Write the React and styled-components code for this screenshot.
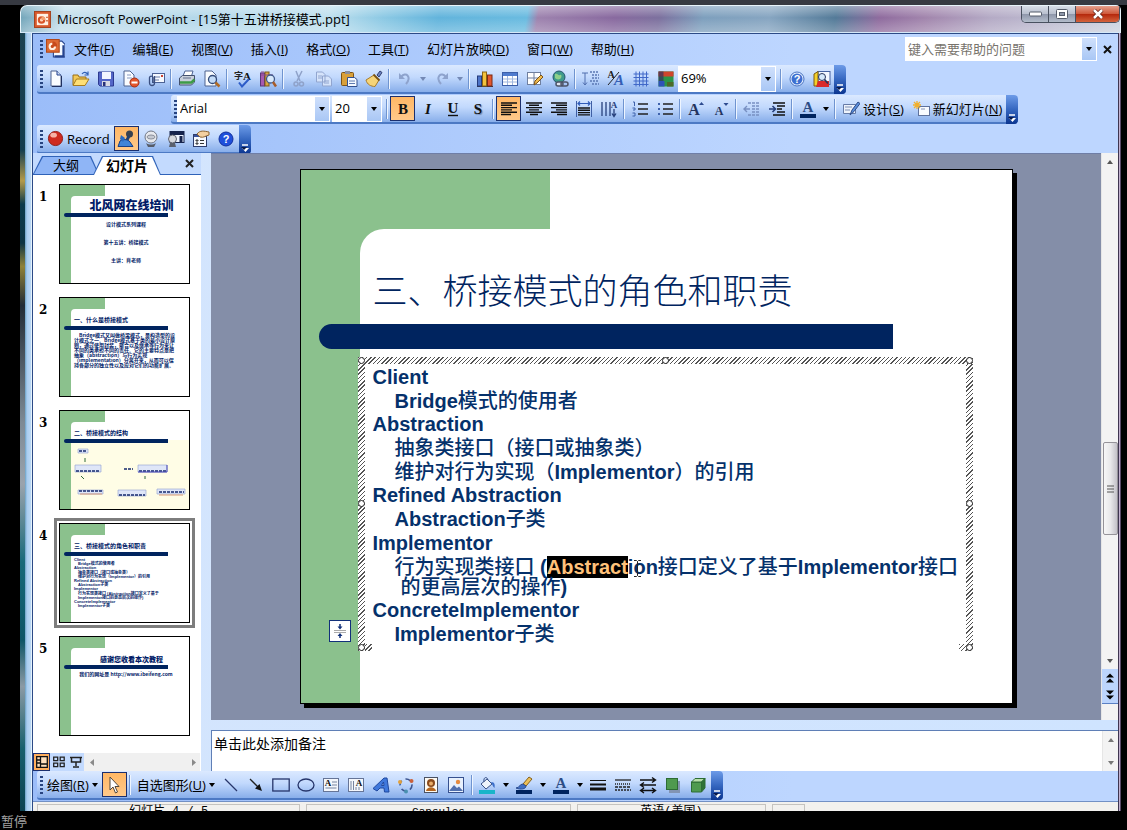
import React from "react";
import styled, { createGlobalStyle, css } from "styled-components";

const ui = `"Open Sans", "Noto Sans CJK SC", sans-serif`;
const cjk = `"Noto Sans CJK SC", sans-serif`;
const navy = "#00245f";
const green = "#8bc18d";

const Global = createGlobalStyle`
  *, *::before, *::after { box-sizing: border-box; }
  body { margin: 0; background: #000; font-family: ${ui}; font-size: 13px; color: #000; }
  button, input, select, textarea { font: inherit; color: inherit; margin: 0; border-radius: 0; }
  button { background: none; border: 0; padding: 0; }
  h1, h2, p, ul, ol { margin: 0; padding: 0; font-weight: inherit; list-style: none; }
`;

/* ---------- window frame ---------- */
const Page = styled.div`
  height: 100vh;
  min-height: 600px;
  display: flex;
  flex-direction: column;
  overflow: hidden;
`;
const DesktopStrip = styled.div`height: 5px; flex: none; background: #373a42;`;
const Window = styled.div`
  flex: 1;
  min-height: 0;
  margin: 0 6px 0 20px;
  display: flex;
  flex-direction: column;
`;
const TitleBar = styled.header`
  height: 28px;
  flex: none;
  display: flex;
  align-items: center;
  gap: 6px;
  padding-left: 13px;
  border: 1px solid #e8f4fa;
  border-bottom-color: #d5e8f8;
  border-radius: 7px 5px 0 0;
  background:
    linear-gradient(180deg, rgba(255,255,255,.35), rgba(255,255,255,0) 45%, rgba(255,255,255,.25)),
    linear-gradient(100deg, #6fa3b8 0, #c5dfec 4%, #b4d8ea 16%, #bfe0ee 28%, #8cc9e4 33%, #62b4dc 38%, #69bbe0 46%, #9d82ae 47%, #88699f 54%, #7c709e 58%, #7d9fbd 62%, #86a5c1 68%, #537a98 74%, #8f6b9e 78%, #a184ac 82%, #b4aac5 88%, #cbd3e0 100%);
`;
const TitleText = styled.h1`font-size: 13px; line-height: 20px; flex: 1; white-space: nowrap;`;
const Caption = styled.div`
  align-self: flex-start;
  display: flex;
  border: 1px solid #48505f;
  border-top: 0;
  border-radius: 0 0 5px 5px;
  overflow: hidden;
`;
const CaptionButton = styled.button`
  width: ${(p) => (p.$close ? 43 : 27)}px;
  height: 16px;
  display: flex;
  align-items: center;
  justify-content: center;
  border-right: ${(p) => (p.$close ? 0 : "1px solid #48505f")};
  background: ${(p) =>
    p.$close
      ? "linear-gradient(#e5a08d, #cf5a3c 48%, #b5280c 52%, #d4633c)"
      : "linear-gradient(#d8dee8, #b9c0cf 48%, #8f97ab 52%, #b3bccb)"};
`;
const Body = styled.div`flex: 1; min-height: 0; display: flex;`;
const GlassEdge = styled.div`
  width: 12px;
  flex: none;
  background:
    linear-gradient(90deg, transparent 5px, #6aa0c4 5px, #a9cdf0 7px, #bcd8f4 11px, #e4f2fc 11px),
    linear-gradient(180deg, #1c4352 0, #123d4d 15%, #b39a4a 19%, #0b3a4b 22%, #0d3444 27%, #8f8238 30%, #222c36 35%, #7d8a95 50%, #9aa3ad 58%, #17697a 68%, #0e5466 78%, #8b9aa5 84%, #16606d 92%, #0c4250 100%);
`;
const RightEdge = styled.div`
  width: 3px;
  flex: none;
  background: linear-gradient(90deg, #3e3550 1px, #c3b3d0 1px, #c3b3d0 2px, #5a4a68 2px);
`;
const Client = styled.main`
  flex: 1;
  min-width: 0;
  display: flex;
  flex-direction: column;
  border-left: 1px solid #2c4a86;
  border-top: 1px solid #2c4a86;
  background: linear-gradient(90deg, #9bbdf9, #bdd6ff 70%);
`;

/* ---------- menus and toolbars ---------- */
const Grip = styled.span`
  width: 3px;
  height: 18px;
  flex: none;
  margin-left: 3px;
  background: repeating-linear-gradient(180deg, #27437f 0 2px, transparent 2px 4px);
`;
const MenuRow = styled.nav`
  height: 30px;
  flex: none;
  display: flex;
  align-items: center;
  padding-left: 4px;
  svg { flex: none; }
  > svg { margin: 0 0 2px 3px; }
`;
const MenuItem = styled.button`padding: 0 9px; line-height: 20px; white-space: nowrap;`;
const MenuSpacer = styled.div`flex: 1;`;
const AskBox = styled.div`
  width: 192px;
  height: 24px;
  display: flex;
  background: #fff;
  padding: 1px;
  input { flex: 1; min-width: 0; border: 0; padding: 0 2px; background: #fff; outline: 0; }
  input::placeholder { color: #77736c; opacity: 1; }
`;
const ArrowBox = styled.button`
  width: 14px;
  align-self: stretch;
  flex: none;
  display: flex;
  align-items: center;
  justify-content: center;
  background: linear-gradient(#cfe0fc, #a9c7f5);
`;
const DocClose = styled.button`width: 21px; height: 24px; display: flex; align-items: center; justify-content: center;`;

const ToolbarRow = styled.div`
  flex: none;
  height: ${(p) => p.$h || 30}px;
  padding: ${(p) => (p.$flush ? 0 : 1)}px 0 0 ${(p) => p.$indent || 4}px;
  display: flex;
`;
const Toolbar = styled.div`
  height: 29px;
  display: flex;
  align-items: center;
  border-radius: 3px 4px 4px 3px;
  border-bottom: 2px solid #4c79c4;
  background: linear-gradient(#dbe9ff, #c2d9fd 45%, #88aeea);
`;
const ToolButton = styled.button`
  width: 25px;
  height: 25px;
  flex: none;
  display: flex;
  align-items: center;
  justify-content: center;
  ${(p) =>
    p.$on &&
    css`
      border: 1px solid #1b2f6e;
      background: linear-gradient(#ffb765, #ffc98a);
    `}
`;
const LabelButton = styled.button`
  height: 25px;
  flex: none;
  display: flex;
  align-items: center;
  gap: 3px;
  padding: 0 4px;
  white-space: nowrap;
`;
const DropButton = styled.button`
  width: 12px;
  height: 25px;
  flex: none;
  display: flex;
  align-items: center;
  justify-content: center;
`;
const Divider = styled.span`
  width: 2px;
  height: 20px;
  flex: none;
  margin: 0 2px;
  background: linear-gradient(90deg, #6f94d0 1px, #eef5ff 1px);
`;
const Cap = styled.button`
  width: 12px;
  height: 29px;
  flex: none;
  align-self: flex-start;
  display: flex;
  align-items: flex-end;
  justify-content: center;
  padding-bottom: 2px;
  border-radius: 0 4px 4px 0;
  background: linear-gradient(#6d9be8, #3567c0 50%, #0b3590);
`;
const Combo = styled.label`
  width: ${(p) => p.$w}px;
  height: 26px;
  margin-right: 2px;
  display: flex;
  padding: 1px;
  background: #fff;
  select { flex: 1; min-width: 0; appearance: none; border: 0; padding: 0 0 1px 2px; background: #fff; outline: 0; }
  span { width: 14px; display: flex; align-items: center; justify-content: center; background: linear-gradient(#cfe0fc, #a9c7f5); }
`;

/* ---------- work area ---------- */
const Work = styled.div`
  flex: 1;
  min-height: 0;
  display: grid;
  grid-template-columns: 168px minmax(0, 1fr);
  column-gap: 10px;
  background: linear-gradient(90deg, #d4e5fd, #cfe4ff);
`;
const Pane = styled.aside`display: flex; flex-direction: column; min-height: 0; background: #fff;`;
const Tabs = styled.div`
  height: 22px;
  flex: none;
  display: flex;
  align-items: flex-end;
  border-bottom: 1px solid #2f62b8;
  background: #c3dafe;
`;
const Tab = styled.button`
  position: relative;
  z-index: 0;
  width: ${(p) => (p.$on ? 68 : 66)}px;
  height: ${(p) => (p.$on ? 19 : 18)}px;
  margin-left: ${(p) => (p.$on ? -6 : 0)}px;
  margin-bottom: ${(p) => (p.$on ? -1 : 0)}px;
  line-height: 18px;
  font-size: ${(p) => (p.$on ? 14 : 13)}px;
  font-weight: ${(p) => (p.$on ? 700 : 400)};
  &::before, &::after {
    content: "";
    position: absolute;
    z-index: -1;
    inset: 0;
    background: #2f62b8;
    clip-path: polygon(9px 0, calc(100% - 8px) 0, 100% 100%, 0 100%);
  }
  &::after { inset: 1px 1px 0; background: ${(p) => (p.$on ? "#fff" : "#8fb5f6")}; }
`;
const PaneClose = styled.button`margin-left: auto; width: 24px; height: 22px; display: flex; align-items: center; justify-content: center;`;
const ThumbList = styled.ol`
  flex: 1;
  min-height: 0;
  overflow: hidden;
  padding-top: 4px;
  display: flex;
  flex-direction: column;
  gap: 3px;
`;
const ThumbItem = styled.li`
  flex: none;
  display: grid;
  grid-template-columns: 21px 141px;
  font: 700 12px/16px "DejaVu Serif", serif;
  > span { padding: 10px 0 0 6px; }
`;
const ThumbFrame = styled.button`
  height: 110px;
  padding: 2px;
  border: 3px solid ${(p) => (p.$on ? "#7d7d7d" : "transparent")};
  text-align: left;
`;
const Thumb = styled.div`
  height: 100px;
  border: 1px solid #000;
  padding: 11px 0 0 11px;
  background:
    linear-gradient(${green}, ${green}) 0 0 / 45px 11px no-repeat,
    linear-gradient(${green}, ${green}) 0 0 / 15px 15px no-repeat,
    linear-gradient(${green}, ${green}) 0 0 / 11px 100% no-repeat,
    #fff;
`;
const ThumbInner = styled.div`
  height: 87px;
  border-top-left-radius: 4px;
  background: ${(p) => (p.$cream ? "linear-gradient(#fff 18px, #fffde6 18px)" : "#fff")};
  color: #001a66;
  font: 700 5px/5px ${cjk};
`;
const ThumbTitle = styled.div`
  height: 17px;
  display: flex;
  align-items: flex-end;
  justify-content: ${(p) => (p.$center ? "center" : "flex-start")};
  padding: 0 0 ${(p) => (p.$center ? 2 : 3)}px 3px;
  font-size: ${(p) => p.$size || 6}px;
  line-height: ${(p) => p.$size || 6}px;
  font-weight: ${(p) => (p.$size ? 900 : 700)};
  white-space: nowrap;
`;
const ThumbBar = styled.div`
  width: 104px;
  height: 4px;
  margin-left: -7px;
  border-radius: 2px 0 0 2px;
  background: ${navy};
`;
const ThumbCenter = styled.div`
  display: flex;
  flex-direction: column;
  align-items: center;
  gap: 13px;
  padding: ${(p) => p.$top}px 8px 0 0;
`;
const ThumbText = styled.div`padding: 2px 12px 0 3px; font-size: 5px; line-height: 5px;`;
const ThumbLine = styled.div`
  padding-left: ${(p) => (p.$in ? 4 : 0)}px;
  font: 700 4px/4px "Liberation Sans", ${cjk};
`;
const ThumbLines = styled.div`display: grid; align-content: space-between; height: 52px; padding: 2px 8px 0 3px;`;
const PaneFoot = styled.div`height: 18px; flex: none; display: flex; background: #c3dafe; margin-right: 1px;`;
const ViewButton = styled.button`
  width: 17px;
  height: 18px;
  display: flex;
  align-items: center;
  justify-content: center;
  ${(p) => p.$on && css`border: 1px solid #1b2f6e; background: #ffae5c;`}
`;
const HScroll = styled.div`
  flex: 1;
  display: flex;
  align-items: center;
  justify-content: space-between;
  padding: 0 4px 0 6px;
  background: #f0f0f0;
`;

const Editor = styled.section`display: flex; flex-direction: column; min-height: 0; min-width: 0;`;
const Stage = styled.div`flex: 1; min-height: 0; display: flex; background: #848ea8; box-shadow: inset 0 1px 0 #6f7ea6;`;
const Canvas = styled.div`
  flex: 1;
  min-width: 0;
  display: flex;
  align-items: center;
  justify-content: center;
`;
const Slide = styled.article`
  width: 100%;
  max-width: 713px;
  height: 535px;
  flex: none;
  border: 1px solid #000;
  box-shadow: 4px 4px 0 #000;
  padding: 59px 0 0 59px;
  background:
    linear-gradient(${green}, ${green}) 0 0 / 249px 59px no-repeat,
    linear-gradient(${green}, ${green}) 0 0 / 85px 85px no-repeat,
    linear-gradient(${green}, ${green}) 0 0 / 59px 100% no-repeat,
    #fff;
`;
const SlidePanel = styled.div`height: 100%; background: #fff; border-top-left-radius: 24px;`;
const SlideTitle = styled.h2`
  height: 95px;
  padding: 38px 0 0 13px;
  font: 300 35px/44px ${cjk};
  color: ${navy};
  white-space: nowrap;
`;
const TitleRule = styled.div`
  height: 25px;
  margin: 0 119px 0 -41px;
  border-radius: 13px 0 0 13px;
  background: ${navy};
`;
const hatch = "repeating-linear-gradient(135deg, #555 0 1px, #fff 1px 3px)";
const TextFrame = styled.div`
  position: relative;
  height: 294px;
  margin: 8px 39px 0 -2px;
  padding: 10px 11px 7px 15px;
  background:
    ${hatch} 0 0 / 100% 7px no-repeat,
    ${hatch} 0 0 / 7px 100% no-repeat,
    ${hatch} 100% 0 / 7px 100% no-repeat,
    ${hatch} 0 100% / 14px 7px no-repeat,
    ${hatch} 100% 100% / 14px 7px no-repeat;
`;
const Bullets = styled.ul`
  height: 100%;
  display: flex;
  flex-direction: column;
  justify-content: space-between;
  font: 700 20px/20px "Liberation Sans", ${cjk};
  color: #05316b;
`;
const Bullet = styled.li`
  padding-left: ${(p) => (p.$in ? 28 : 0)}px;
  text-indent: ${(p) => (p.$in ? -6 : 0)}px;
  i { font-style: normal; font-weight: 500; }
`;
const Marked = styled.mark`background: #000; color: #ffc27a;`;
const Handle = styled.span`
  position: absolute;
  width: 7px;
  height: 7px;
  border: 1px solid #222;
  border-radius: 50%;
  background: #fff;
  left: ${(p) => p.$x};
  top: ${(p) => p.$y};
`;
const FitButton = styled.button`
  position: absolute;
  left: -29px;
  bottom: 9px;
  width: 22px;
  height: 22px;
  display: flex;
  align-items: center;
  justify-content: center;
  border: 1px solid #12307a;
  background: #fff;
`;
const CursorSpot = styled.span`
  position: relative;
  svg { position: absolute; left: 5px; top: 4px; }
`;
const VScroll = styled.div`
  width: ${(p) => p.$w || 17}px;
  flex: none;
  display: flex;
  flex-direction: column;
  background: #f3f3f3;
  border-left: 1px solid #e6e6e6;
`;
const ScrollArrow = styled.button`height: 17px; flex: none; display: flex; align-items: center; justify-content: center;`;
const Track = styled.div`flex: ${(p) => p.$grow};`;
const ScrollThumb = styled.div`
  height: 93px;
  flex: none;
  margin-left: 1px;
  display: flex;
  align-items: center;
  justify-content: center;
  border: 1px solid #959399;
  border-radius: 2px;
  background: linear-gradient(90deg, #f7f7f7, #e8e8ea 50%, #c3c1c8);
`;
const PageButton = styled.button`height: 17px; flex: none; display: flex; align-items: center; justify-content: center; background: #bcd5fd;`;
const ScrollEnd = styled.div`height: 17px; flex: none; border-top: 1px solid #5b81c4;`;
const NotesRow = styled.div`height: 41px; flex: none; margin-top: 10px; display: flex; border-top: 1px solid #5f7fb6; border-left: 1px solid #5f7fb6; background: #fff;`;
const Notes = styled.textarea`
  flex: 1;
  min-width: 0;
  border: 0;
  outline: 0;
  resize: none;
  overflow: hidden;
  padding: 1px 2px;
  font: 14px/22px ${cjk};
  background: #fff;
`;
const StatusBar = styled.footer`
  height: 10px;
  flex: none;
  display: flex;
  gap: 6px;
  padding: 2px 0 0 4px;
  border-top: 1px solid #7290c4;
  background: #f2f1ee;
  overflow: hidden;
`;
const StatusCell = styled.div`
  flex: 0 1 ${(p) => p.$w}px;
  height: 22px;
  border: 1px solid #c5c3bf;
  text-align: center;
  font: ${(p) => p.$size || 12}px/15px "Liberation Mono", ${cjk};
  white-space: nowrap;
`;
const PlayerStatus = styled.div`height: 19px; flex: none; padding-left: 1px; font: 13px/20px ${cjk}; color: #a3a3a3;`;

/* ---------- icons ---------- */
const Svg = ({ s = 18, w, h, vb, children }) => (
  <svg width={w || s} height={h || s} viewBox={vb || "0 0 18 18"} fill="none" aria-hidden="true">{children}</svg>
);
const Tri = ({ up, c = "#000", w = 6 }) => (
  <svg width={w} height="4" viewBox="0 0 6 4" aria-hidden="true"><path d={up ? "M0 4h6L3 0z" : "M0 0h6L3 4z"} fill={c} /></svg>
);
const Cross = ({ s = 9, c = "#111" }) => (
  <svg width={s} height={s} viewBox="0 0 9 9" aria-hidden="true"><path d="M1 1l7 7M8 1L1 8" stroke={c} strokeWidth="2" /></svg>
);
const Sheet = ({ x = 3, y = 1, w = 11, h = 15 }) => (
  <path d={`M${x} ${y}h${w - 4}l4 4v${h - 4}h-${w}z`} fill="#fafcff" stroke="#4e628f" />
);
const Letter = ({ children, x = 9, y = 14, size = 15, fill = "#111", ...rest }) => (
  <text x={x} y={y} fontSize={size} fontFamily="Liberation Serif, serif" fontWeight="700" textAnchor="middle" fill={fill} {...rest}>{children}</text>
);
const Rows = ({ xs, y = 4, c = "#111", sw = 1.4 }) => (
  <path d={xs.map(([a, b], i) => `M${a} ${y + i * 2.3}H${b}`).join("")} stroke={c} strokeWidth={sw} />
);

const icons = {
  ppt: <><rect x=".5" y=".5" width="17" height="17" fill="#d9592c" stroke="#a3401c" /><rect x="3" y="3" width="12" height="12" fill="#fff1e4" /><circle cx="8" cy="9.500" r="4" fill="#d8552a" /><circle cx="8" cy="9.500" r="1.700" fill="#ffd7bd" /><path d="M8 9.500V5.500a4 4 0 0 1 4 4z" fill="#f3a06f" /><path d="M13 6h1.500v1.500H13zM13 9.500h1.500V11H13z" fill="#c24a1e" /></>,
  doc: <><path d="M7 2h8l3 3v12H7z" fill="#f5f9ff" stroke="#24438f" /><path d="M16.500 6v10.500H8" stroke="#24438f" strokeWidth="2" /><rect x=".5" y=".5" width="12" height="12" fill="#dd6a35" stroke="#b34717" /><circle cx="6" cy="7" r="3.500" fill="#fff0e2" /><circle cx="6" cy="7" r="1.500" fill="#c84a1b" /><path d="M6 7V2.500A4 4 0 0 1 10.500 7z" fill="#c84a1b" /></>,
  fresh: <><Sheet x={4} w={10} /><path d="M10 1v4h4" stroke="#24438f" fill="#c8d8f4" /><path d="M14.500 6v10.500H5" stroke="#1f2f5e" /></>,
  open: <><path d="M1 15V5h5l1 2h7v3" fill="#f2c958" stroke="#9a6f16" /><path d="M1 15.500L4.500 9H17l-4 6.500z" fill="#ffdf75" stroke="#a87c1d" /><path d="M10 4c2-2.500 4-2 5.500 0M16 1.500V5h-3.500" stroke="#2e5fb5" strokeWidth="1.200" /></>,
  save: <><path d="M1.500 2h15v14H3l-1.500-1.500z" fill="#5466c8" stroke="#2c3a91" /><rect x="5" y="2" width="9" height="7" fill="#f3f6ff" /><rect x="5" y="11" width="8" height="5" fill="#d7d9e4" /><rect x="6" y="12" width="2.500" height="4" fill="#27307a" /></>,
  perm: <><Sheet x={2} w={10} /><path d="M5 5h4M5 8h5" stroke="#8a9bc0" /><circle cx="12.500" cy="12.500" r="4.500" fill="#e4562c" stroke="#a72d12" /><path d="M9.500 12.500h6" stroke="#fff" strokeWidth="2" /></>,
  mail: <><rect x="5.500" y="3.500" width="12" height="9" fill="#f5f9ff" stroke="#4c6294" /><path d="M8 7h5M8 10h4" stroke="#6d7fa8" /><rect x="14" y="5" width="2" height="2" fill="#c43" /><path d="M7.500 6v7a2.500 2.500 0 0 1-5 0V7.500a1.800 1.800 0 0 1 3.500 0V13" stroke="#3a4f80" strokeWidth="1.300" /></>,
  print: <><path d="M5 6l2-5h8l-1.500 5" fill="#fff" stroke="#4c6294" /><path d="M1.500 8l3-2.500h12V12l-3 3h-12z" fill="#c8cfdb" stroke="#44516e" /><path d="M2 12.500h11.500l3-3" stroke="#3d9b47" strokeWidth="2.500" /><path d="M5 8h8" stroke="#65718c" /></>,
  preview: <><Sheet x={2} w={11} /><circle cx="9.500" cy="9.500" r="4" fill="#c4dcf8" stroke="#334a78" strokeWidth="1.300" /><path d="M12.500 12.500l4 4" stroke="#b26b23" strokeWidth="2.500" /></>,
  spell: <><text x="0" y="9" fontSize="9" fontWeight="700" fontFamily="Noto Sans CJK SC" fill="#222">字</text><Letter x={13} y={10} size={11}>A</Letter><path d="M5 12.500l3 4L15 9" stroke="#2d5cc8" strokeWidth="2" /></>,
  research: <><rect x="1.500" y="3" width="4" height="13" fill="#a65ab0" stroke="#5a347a" /><rect x="6" y="2" width="4" height="14" fill="#d6a640" stroke="#7c5a1e" /><path d="M2 5h12M2 2h3" stroke="#8a4a90" /><circle cx="11.500" cy="9" r="4" fill="#d8e9fb" stroke="#405a8b" strokeWidth="1.300" /><path d="M14 12l3 4.500" stroke="#a75c28" strokeWidth="2.500" /></>,
  cut: <><path d="M6 1l4 10M12 1L7 11" stroke="#8fa2c9" strokeWidth="1.500" /><circle cx="6" cy="14" r="2" stroke="#8fa2c9" strokeWidth="1.500" /><circle cx="11.500" cy="14" r="2" stroke="#8fa2c9" strokeWidth="1.500" /></>,
  copy: <><path d="M1.500 2h6l2.500 2.500V12H1.500zM7.500 6h6l3 3v7h-9z" fill="#d5e3fa" stroke="#91a5cf" /><path d="M3 6h4M3 8h4M9 11h5M9 13h5" stroke="#91a5cf" /></>,
  paste: <><rect x="1.500" y="2.500" width="12" height="13" rx="1" fill="#d9a03a" stroke="#7e5415" /><rect x="5" y="1" width="5" height="3" fill="#8a8f9e" /><path d="M7.500 7.500h7l2.500 2v7H7.500z" fill="#f5f9ff" stroke="#33508f" /><path d="M9 11h6M9 13.500h6" stroke="#5f7ab0" /></>,
  brush: <><path d="M12 5l3-4 2 1.500-3 4.500z" fill="#6b83c4" stroke="#33406e" /><path d="M1 10l8-5 5 5-4 6.500c-4 0-8-2-9-6.500z" fill="#f6d477" stroke="#a87c2a" /><path d="M8.500 4.500l6 6" stroke="#7a5210" strokeWidth="1.800" /></>,
  undo: <><path d="M5 7c5-6 11 0 5 7" stroke="#8ea3cd" strokeWidth="2" /><path d="M3 3v6h6z" fill="#8ea3cd" /></>,
  redo: <><path d="M13 7c-5-6-11 0-5 7" stroke="#8ea3cd" strokeWidth="2" /><path d="M15 3v6H9z" fill="#8ea3cd" /></>,
  chart: <><path d="M1 16.500h16" stroke="#334" /><rect x="1.500" y="6" width="4" height="10" fill="#4d74c8" stroke="#243b7d" /><rect x="6.500" y="2" width="4" height="14" fill="#f3c33e" stroke="#8b6414" /><rect x="11.500" y="5" width="4.500" height="11" fill="#e2582e" stroke="#7d2812" /></>,
  table: <><rect x="1.500" y="2.500" width="15" height="13" fill="#fff" stroke="#3c5fa8" /><path d="M2 3h14v3H2z" fill="#4f7bce" /><path d="M2 9h14M2 12h14M6.500 6v9M11.500 6v9" stroke="#9fb6de" /></>,
  drawTable: <><rect x="1.500" y="2.500" width="13" height="12" fill="#fff" stroke="#6f7f9f" /><path d="M2 8h12M8 3v11" stroke="#6f7f9f" /><path d="M8 15l1-4 6-6 2 2-6 6z" fill="#f0bb4f" stroke="#7c5317" /></>,
  link: <><circle cx="8" cy="7" r="6" fill="#3f9a8c" stroke="#27556f" /><path d="M4 4c3-1 3 2 5 1s2 3 0 4-4 0-5-1z" fill="#8fd08a" /><rect x="5" y="12" width="7" height="4" rx="2" stroke="#4c5468" strokeWidth="1.500" fill="#dde3ee" /><rect x="10" y="12" width="7" height="4" rx="2" stroke="#4c5468" strokeWidth="1.500" /></>,
  expand: <><path d="M3 3v12M1 12.500L3 15l2-2.500M0 3h6" stroke="#516fae" /><path d="M8 2h9M10 5h7M10 8h7M8 11h9M10 14h7" stroke="#5b78b4" strokeDasharray="2 1" strokeWidth="1.300" /></>,
  fontAA: <><Letter x={4} y={8} size={10} fill="#222">A</Letter><path d="M1 15L12 2" stroke="#222" /><Letter x={12} y={15} size={15} fill="#355eb5" fontStyle="italic">A</Letter></>,
  grid: <path d="M4 1.500v15M7.500 1.500v15M11 1.500v15M14.500 1.500v15M1.500 4h15M1.500 7.500h15M1.500 11h15M1.500 14.500h15" stroke="#4068c8" />,
  colour: <><rect x="1.500" y="1.500" width="15" height="15" fill="#2c9448" /><path d="M1.500 1.500h15v5h-15z" fill="#d0452c" /><path d="M1.500 11h6v5.500h-6z" fill="#2f52b8" /><path d="M10 12h6.500v4.500H10z" fill="#4d6a28" /><path d="M1.500 1.500h5v9.500h-5z" fill="#33305f" opacity=".7" /></>,
  help: <><circle cx="9" cy="9" r="7" fill="#e8f1fe" stroke="#4a74c2" /><circle cx="9" cy="9" r="5.500" fill="#3d6fd0" /><text x="9" y="13" fontSize="11" fontWeight="700" textAnchor="middle" fontFamily="Liberation Sans" fill="#fff">?</text></>,
  helpSolid: <><circle cx="9" cy="9" r="7" fill="#1f4fdb" stroke="#12309c" /><text x="9" y="13" fontSize="11" fontWeight="700" textAnchor="middle" fontFamily="Liberation Sans" fill="#fff">?</text></>,
  dict: <><rect x="5" y="1.500" width="12" height="13" fill="#f4f8ff" stroke="#4561a0" /><path d="M1 4l4-2.500V16H1z" fill="#f4d02a" stroke="#7a5b10" /><path d="M5 11h11v6H3z" fill="#d9292b" /><circle cx="9" cy="7" r="3.500" fill="#d6e9fb" stroke="#27355c" /><path d="M11.500 9.500l3.500 4" stroke="#27355c" strokeWidth="1.800" /></>,
  bold: <Letter>B</Letter>,
  italic: <Letter fontStyle="italic">I</Letter>,
  under: <><Letter y={13}>U</Letter><path d="M4 15.500h10" stroke="#111" strokeWidth="1.400" /></>,
  shadow: <Letter style={{ textShadow: "1px 1px 1px #7188b0" }}>S</Letter>,
  left: <Rows xs={[[1, 17], [1, 12], [1, 17], [1, 12], [1, 17], [1, 11]]} y={3} />,
  center: <Rows xs={[[1, 17], [4, 14], [1, 17], [4, 14], [1, 17], [5, 13]]} y={3} />,
  right: <Rows xs={[[1, 17], [6, 17], [1, 17], [6, 17], [1, 17], [7, 17]]} y={3} />,
  dist: <><path d="M1.500 1v16M16.500 1v16" stroke="#3f5fa5" /><path d="M3 3.500h12M5 1.500l-2 2 2 2M13 1.500l2 2-2 2" stroke="#2f5bb8" strokeWidth="1.200" /><Rows xs={[[3, 15], [3, 15], [3, 15], [3, 15]]} y={8} /></>,
  vert: <><path d="M2 2v14M6 2v14M10 2v14M14 9v7M12 13.500l2 3 2-3" stroke="#27407c" strokeWidth="1.300" /><Letter x={14} y={8} size={9} fill="#27407c">A</Letter></>,
  nums: <><path d="M7 4h10M7 9h10M7 14h10" stroke="#222" strokeWidth="1.500" /><path d="M2 2h1.500v4M1.500 8H4v2H2M1.500 13H4v3H1.500" stroke="#3f62ac" /></>,
  dots: <><path d="M7 4h10M7 9h10M7 14h10" stroke="#222" strokeWidth="1.500" /><path d="M2 3h2v2H2zM2 8h2v2H2zM2 13h2v2H2z" fill="#3f62ac" /></>,
  bigger: <><Letter x={7} y={15} size={16} fill="#24345f">A</Letter><path d="M12 5l2.500-3L17 5z" fill="#2d4b8f" /></>,
  smaller: <><Letter x={7} y={15} size={12} fill="#24345f">A</Letter><path d="M11.500 3l2.500 3 2.500-3z" fill="#2d4b8f" /></>,
  outdent: <><path d="M5 3h12M9 6h8M9 9h8M9 12h8M5 15h12" stroke="#7890c2" strokeWidth="1.400" strokeDasharray="3 1" /><path d="M7 9H1M4 6L1 9l3 3" stroke="#7890c2" strokeWidth="1.400" /></>,
  indent: <><path d="M5 3h12M9 6h8M9 9h5M9 12h8M5 15h12" stroke="#111" strokeWidth="1.700" /><path d="M1 9h6M4.500 6l3 3-3 3" stroke="#27407c" strokeWidth="1.600" /></>,
  fontColour: <><Letter y={12} size={15} fill="#2d4d86">A</Letter><rect x="1" y="14" width="16" height="4" fill={navy} /></>,
  design: <><path d="M1.500 4.500h12v9h-12z" fill="#eef3fb" stroke="#667ba6" /><path d="M3 7h7M3 10h5" stroke="#7d8fb5" /><path d="M8 15l2-5 6-8 2 1.500-6 8z" fill="#5a8fdc" stroke="#314c87" /></>,
  newSlide: <><rect x="6.500" y="6.500" width="11" height="9" fill="#f8fbff" stroke="#5f729c" /><path d="M9 9h4" stroke="#8493b4" /><path d="M5 1v8M1 5h8M2 2l6 6M8 2L2 8" stroke="#f2b02c" strokeWidth="1.300" /></>,
  record: <><circle cx="9" cy="9" r="7.500" fill="#cf2a20" stroke="#8e1a12" /><ellipse cx="7" cy="5.500" rx="3.500" ry="2.500" fill="#f7b1a6" /></>,
  mic: <><circle cx="12.500" cy="4" r="3.500" fill="#39414f" /><path d="M12 6l-4 8" stroke="#24406e" strokeWidth="3" /><path d="M3 11c2-2 8-2 10 1l3 4.500H1z" fill="#3f84d8" stroke="#173f86" /><path d="M4 5l4 3-2 4-3-3z" fill="#2a6ac0" /></>,
  webcam: <><circle cx="9" cy="7" r="6" fill="#e8eaee" stroke="#707684" /><ellipse cx="9" cy="7" rx="4" ry="2" fill="#c6cad2" stroke="#8b909c" /><path d="M4 13c3 2 7 2 10 0l-2 4H6z" fill="#565c68" /></>,
  camWin: <><rect x="3" y="1.500" width="14" height="11" fill="#eef4ff" stroke="#15234c" /><path d="M3 2h14v3H3z" fill="#15234c" /><path d="M14 6v6" stroke="#15234c" strokeWidth="3" /><circle cx="5.500" cy="9" r="4" fill="#d6d9df" stroke="#5e6370" /><path d="M3 13h5l1 4H2z" fill="#5b616e" /></>,
  props: <><rect x="1.500" y="4.500" width="13" height="12" fill="#f6f9ff" stroke="#2d3d6d" /><path d="M2 5h12v2H2z" fill="#39519a" /><path d="M4 10h2v1H4zM4 13h2v1H4zM8 10.500h4M8 13.500h4" stroke="#333" /><path d="M5 4c3-4 7-3 12-2v3c-4 1-5 3-9 2z" fill="#f3cfa0" stroke="#8d6533" /></>,
  pointer: <path d="M5 1v13l3-3 2.500 6 2-1-2.500-5.500h4z" fill="#fff" stroke="#51473c" />,
  line: <path d="M3 3l12 12" stroke="#27366a" strokeWidth="1.300" />,
  arrow: <><path d="M3 3l9 9" stroke="#222" strokeWidth="1.300" /><path d="M15 15l-7-2.500L12.500 8z" fill="#111" /></>,
  rect: <rect x=".8" y="3" width="16.400" height="12" stroke="#26356a" strokeWidth="1.300" />,
  oval: <ellipse cx="9" cy="9" rx="8" ry="6" stroke="#26356a" strokeWidth="1.300" />,
  textBox: <><rect x="1.500" y="2.500" width="15" height="13" fill="#f4f7fc" stroke="#667597" /><Letter x={6} y={10} size={9}>A</Letter><path d="M10 6h5M10 9h5M3.500 12h11" stroke="#77849f" /></>,
  vText: <><rect x="1.500" y="2.500" width="15" height="13" fill="#f4f7fc" stroke="#667597" /><Letter x={12} y={10} size={9}>A</Letter><path d="M4 5v9M6.500 5v9M9 11v3M12 11v3" stroke="#77849f" /></>,
  wordArt: <path d="M1 12.500L12 2h3l2 14h-4.500l-.5-4H8l-3 3zM9.500 9.500h2.500l-.5-3.500z" fill="#3f78dc" fillRule="evenodd" stroke="#1f489f" />,
  diagram: <><circle cx="9" cy="9" r="6" stroke="#3c5590" strokeWidth="1.600" strokeDasharray="5 4" /><circle cx="3" cy="6" r="2" fill="#e2a13c" /><circle cx="14.500" cy="5" r="2" fill="#c9603a" /><circle cx="9" cy="15.500" r="2" fill="#4a90b0" /></>,
  clip: <><rect x="2.500" y="1.500" width="13" height="15" fill="#fdfaf3" stroke="#4b5263" /><circle cx="9" cy="7" r="4" fill="#8a4a1c" /><circle cx="9" cy="7.500" r="2" fill="#e9ae6a" /><path d="M4 15c1-5 9-5 10 0z" fill="#b3651f" /></>,
  picture: <><rect x="1.500" y="1.500" width="15" height="15" fill="#e8f1fd" stroke="#37518f" /><circle cx="11" cy="6" r="2.200" fill="#e58a3f" /><path d="M2 15l5-6 3 3 2-1.500 4 4.500z" fill="#506fae" /></>,
  fill: <><path d="M3 8l6-5 5 5-6 5z" fill="#eef3fb" stroke="#3a5288" /><path d="M6 6c-1-5 3-6 4-2" stroke="#3a5288" /><path d="M13 6c4 0 4 3 3.500 6-1.500-1-2-3-3.500-6z" fill="#3d6fca" /><rect x="1" y="14" width="16" height="4" fill="#19b5c9" /></>,
  lineColour: <><path d="M8 8l6-7 3 2-6 7z" fill="#edc158" stroke="#856019" /><path d="M1 12c4 0 3-4 7-4l3 2c0 3-5 4-10 2z" fill="#3f6fc4" stroke="#2b4c90" /><rect x="1" y="14" width="16" height="4" fill={navy} /></>,
  weights: <><path d="M1 4.500h16" stroke="#111" /><path d="M1 8.500h16" stroke="#111" strokeWidth="2" /><path d="M1 13h16" stroke="#111" strokeWidth="3" /></>,
  dashes: <><path d="M1 4h16" stroke="#222" strokeWidth="1.300" /><path d="M1 8h16" stroke="#222" strokeDasharray="1 1" strokeWidth="1.300" /><path d="M1 11h16" stroke="#222" strokeDasharray="3 1" strokeWidth="1.300" /><path d="M1 14h16" stroke="#222" strokeDasharray="2 1" strokeWidth="1.300" /></>,
  arrows: <path d="M1 4h15M13 1.500L16.500 4 13 6.500M17 9H2M5 6.500L1.500 9 5 11.500M2 14.500h14M5 12l-3.500 2.500L5 17M13 12l3.500 2.500L13 17" stroke="#111" strokeWidth="1.400" />,
  shade: <><rect x="5" y="5" width="11" height="12" fill="#8294b3" /><rect x="2.500" y="2.500" width="11" height="11" fill="#4f9a4f" stroke="#2d6c34" /></>,
  cube: <><path d="M2.500 6h10v10h-10z" fill="#4f9a4f" stroke="#2d6c34" /><path d="M2.500 6L6 2.500h10L12.500 6z" fill="#b9dfa9" stroke="#2d6c34" /><path d="M16 2.500V12l-3.500 4V6z" fill="#2f7336" stroke="#2d6c34" /></>,
};

const Tool = ({ icon, label, on }) => (
  <ToolButton $on={on} aria-label={label} aria-pressed={on ? true : undefined}><Svg>{icons[icon]}</Svg></ToolButton>
);
const Tools = ({ list }) =>
  list.map(([icon, label, on], i) => {
    if (icon === "|") return <Divider key={i} />;
    if (icon === "v") return <DropButton key={i} aria-label={label}><Tri c={on || "#000"} /></DropButton>;
    return <Tool key={i} icon={icon} label={label} on={on} />;
  });
const EndCap = () => (
  <Cap aria-label="工具栏选项">
    <svg width="8" height="8" viewBox="0 0 8 8" aria-hidden="true"><path d="M1 1h6" stroke="#fff" strokeWidth="1.500" /><path d="M1 4h7L4.500 8z" fill="#fff" /><path d="M0 3h6L3 6z" fill="#06184a" /></svg>
  </Cap>
);
const Key = ({ text, k }) => <span>{text}(<u>{k}</u>)</span>;
const ComboBox = ({ w, label, value }) => (
  <Combo $w={w}>
    <select aria-label={label} defaultValue={value}><option>{value}</option></select>
    <span><Tri w={8} /></span>
  </Combo>
);

const menus = [["文件", "F"], ["编辑", "E"], ["视图", "V"], ["插入", "I"], ["格式", "O"], ["工具", "T"], ["幻灯片放映", "D"], ["窗口", "W"], ["帮助", "H"]];

const standardTools = [
  ["fresh", "新建"], ["open", "打开"], ["save", "保存"], ["perm", "权限"], ["mail", "电子邮件"], ["|"],
  ["print", "打印"], ["preview", "打印预览"], ["|"], ["spell", "拼写检查"], ["research", "信息检索"], ["|"],
  ["cut", "剪切"], ["copy", "复制"], ["paste", "粘贴"], ["brush", "格式刷"], ["|"],
  ["undo", "撤消"], ["v", "撤消列表", "#7489b5"], ["redo", "恢复"], ["v", "恢复列表", "#7489b5"], ["|"],
  ["chart", "插入图表"], ["table", "插入表格"], ["drawTable", "表格和边框"], ["link", "插入超链接"], ["|"],
  ["expand", "全部展开"], ["fontAA", "显示格式"], ["grid", "显示网格"], ["colour", "颜色/灰度"],
];
const formatTools = [
  ["|"], ["bold", "加粗", true], ["italic", "倾斜"], ["under", "下划线"], ["shadow", "阴影"], ["|"],
  ["left", "左对齐", true], ["center", "居中"], ["right", "右对齐"], ["dist", "分散对齐"], ["vert", "更改文字方向"], ["|"],
  ["nums", "编号"], ["dots", "项目符号"], ["|"], ["bigger", "增大字号"], ["smaller", "减小字号"], ["|"],
  ["outdent", "减少缩进量"], ["indent", "增加缩进量"], ["|"], ["fontColour", "字体颜色"], ["v", "字体颜色列表"], ["|"],
];
const drawTools = [
  ["line", "直线"], ["arrow", "箭头"], ["rect", "矩形"], ["oval", "椭圆"], ["textBox", "文本框"], ["vText", "竖排文本框"],
  ["wordArt", "艺术字"], ["diagram", "组织结构图"], ["clip", "剪贴画"], ["picture", "图片"], ["|"],
  ["fill", "填充颜色"], ["v", "填充颜色列表"], ["lineColour", "线条颜色"], ["v", "线条颜色列表"], ["fontColour", "字体颜色"], ["v", "字体颜色列表"],
  ["weights", "线型"], ["dashes", "虚线线型"], ["arrows", "箭头样式"], ["shade", "阴影样式"], ["cube", "三维效果样式"],
];

const bullets = [
  [0, "Client"],
  [1, "Bridge模式的使用者"],
  [0, "Abstraction"],
  [1, "抽象类接口（接口或抽象类）"],
  [1, "维护对行为实现（Implementor）的引用"],
  [0, "Refined Abstraction"],
  [1, "Abstraction子类"],
  [0, "Implementor"],
  [1, "行为实现类接口 (", "Abstract", "ion接口定义了基于Implementor接口的更高层次的操作)"],
  [0, "ConcreteImplementor"],
  [1, "Implementor子类"],
];
const Mixed = ({ text }) =>
  text.split(/([\u3000-\uffef]+)/).map((t, i) => (i % 2 ? <i key={i}>{t}</i> : t));

const ThumbDiagram = () => (
  <svg width="118" height="60" viewBox="0 0 118 60" fill="none" aria-hidden="true">
    <g fill="#dfe6f8" stroke="#8f9fd0" strokeWidth=".6">
      <path d="M7 6h10v4H7zM4 22h26v7H4zM67 22h29v7H67z" />
      <path d="M7 47h25v4H7zM47 47h28v6H47zM86 46h28v5H86z" />
    </g>
    <g stroke="#162a6e" strokeWidth="1.400" strokeDasharray="3 1">
      <path d="M8 8h8M5 28h24M53 26h9M68 28h27M8 48h24M48 52h26M88 49h25" />
    </g>
    <path d="M14 15v4M10 33l3 3M74 33v3" stroke="#306a3a" />
    <path d="M9 51h22M88 52h24" stroke="#d79a7a" />
    <path d="M96 22v7H67" stroke="#4b48b8" />
  </svg>
);

const thumbs = [
  <ThumbInner>
    <ThumbTitle $center $size={12}>北风网在线培训</ThumbTitle>
    <ThumbBar />
    <ThumbCenter $top={4}><span>设计模式系列课程</span><span>第十五讲：桥接模式</span><span>主讲：肖老师</span></ThumbCenter>
  </ThumbInner>,
  <ThumbInner>
    <ThumbTitle>一、什么是桥接模式</ThumbTitle>
    <ThumbBar />
    <ThumbText>　Bridge模式又叫做桥梁模式，是构造型的设计模式之一。Bridge模式基于类的最小设计原则，通过使用封装，聚合以及继承等行为来让不同的类承担不同的责任。它的主要特点是把抽象（abstraction）与行为实现（implementation）分离开来，从而可以保持各部分的独立性以及应对它们的功能扩展。</ThumbText>
  </ThumbInner>,
  <ThumbInner $cream>
    <ThumbTitle>二、桥接模式的结构</ThumbTitle>
    <ThumbBar />
    <ThumbDiagram />
  </ThumbInner>,
  <ThumbInner>
    <ThumbTitle>三、桥接模式的角色和职责</ThumbTitle>
    <ThumbBar />
    <ThumbLines>{bullets.map(([lv, ...t], i) => <ThumbLine key={i} $in={lv}>{t.join("")}</ThumbLine>)}</ThumbLines>
  </ThumbInner>,
  <ThumbInner>
    <ThumbTitle $center $size={7}>感谢您收看本次教程</ThumbTitle>
    <ThumbBar />
    <ThumbCenter $top={2}><span>我们的网址是 http://www.ibeifeng.com</span></ThumbCenter>
  </ThumbInner>,
];

const handles = [["0px", "0px"], ["calc(50% - 3px)", "0px"], ["calc(100% - 7px)", "0px"], ["0px", "calc(50% - 4px)"], ["calc(100% - 7px)", "calc(50% - 4px)"], ["0px", "calc(100% - 7px)"], ["calc(100% - 7px)", "calc(100% - 7px)"]];

export default function App() {
  return (
    <>
      <Global />
      <Page>
        <DesktopStrip />
        <Window>
          <TitleBar>
            <Svg s={17}>{icons.ppt}</Svg>
            <TitleText>Microsoft PowerPoint - [15第十五讲桥接模式.ppt]</TitleText>
            <Caption>
              <CaptionButton aria-label="最小化"><Svg w={13} h={6} vb="0 0 13 6"><rect x=".5" y="1" width="12" height="4" rx="1" fill="#fff" stroke="#555c6b" /></Svg></CaptionButton>
              <CaptionButton aria-label="最大化"><Svg w={12} h={10} vb="0 0 12 10"><rect x=".5" y=".5" width="11" height="9" rx="1" fill="#fff" stroke="#555c6b" /><rect x="3.500" y="3.500" width="5" height="3" fill="#8e97a9" stroke="#555c6b" /></Svg></CaptionButton>
              <CaptionButton $close aria-label="关闭"><Svg w={12} h={10} vb="0 0 12 10"><path d="M2 1l8 8M10 1L2 9" stroke="#5e2015" strokeWidth="4" /><path d="M2 1l8 8M10 1L2 9" stroke="#fff" strokeWidth="2.500" /></Svg></CaptionButton>
            </Caption>
          </TitleBar>
          <Body>
            <GlassEdge />
            <Client>
              <MenuRow>
                <Grip />
                <Svg s={19}>{icons.doc}</Svg>
                {menus.map(([t, k]) => <MenuItem key={k}><Key text={t} k={k} /></MenuItem>)}
                <MenuSpacer />
                <AskBox>
                  <input aria-label="键入需要帮助的问题" placeholder="键入需要帮助的问题" />
                  <ArrowBox aria-label="最近的问题"><Tri w={8} /></ArrowBox>
                </AskBox>
                <DocClose aria-label="关闭文档"><Cross /></DocClose>
              </MenuRow>

              <ToolbarRow>
                <Toolbar role="toolbar" aria-label="常用">
                  <Grip />
                  <Tools list={standardTools} />
                  <ComboBox w={98} label="显示比例" value="69%" />
                  <Divider />
                  <Tools list={[["help", "帮助"], ["dict", "词典"]]} />
                  <EndCap />
                </Toolbar>
              </ToolbarRow>

              <ToolbarRow $indent={138}>
                <Toolbar role="toolbar" aria-label="格式">
                  <Grip />
                  <ComboBox w={153} label="字体" value="Arial" />
                  <ComboBox w={50} label="字号" value="20" />
                  <Tools list={formatTools} />
                  <LabelButton><Svg>{icons.design}</Svg><Key text="设计" k="S" /></LabelButton>
                  <LabelButton><Svg>{icons.newSlide}</Svg><Key text="新幻灯片" k="N" /></LabelButton>
                  <EndCap />
                </Toolbar>
              </ToolbarRow>

              <ToolbarRow $h={29}>
                <Toolbar role="toolbar" aria-label="录制">
                  <Grip />
                  <LabelButton><Svg s={17}>{icons.record}</Svg>Record</LabelButton>
                  <Tools list={[["mic", "麦克风", true], ["webcam", "摄像头"], ["camWin", "画中画"], ["props", "选项"], ["helpSolid", "帮助"]]} />
                  <EndCap />
                </Toolbar>
              </ToolbarRow>

              <Work>
                <Pane>
                  <Tabs role="tablist">
                    <Tab role="tab" aria-selected="false">大纲</Tab>
                    <Tab role="tab" aria-selected="true" $on>幻灯片</Tab>
                    <PaneClose aria-label="关闭窗格"><Cross c="#222" /></PaneClose>
                  </Tabs>
                  <ThumbList>
                    {thumbs.map((t, i) => (
                      <ThumbItem key={i}>
                        <span>{i + 1}</span>
                        <ThumbFrame $on={i === 3} aria-label={`幻灯片 ${i + 1}`}><Thumb>{t}</Thumb></ThumbFrame>
                      </ThumbItem>
                    ))}
                  </ThumbList>
                  <PaneFoot>
                    <ViewButton $on aria-label="普通视图"><Svg w={12} h={12} vb="0 0 12 12"><path d="M.7.700h10.600v10.600H.7zM4.500 1v10M4.500 8H11M1 4h3M1 7h3" fill="#ffe0bd" stroke="#111" strokeWidth="1.300" /></Svg></ViewButton>
                    <ViewButton aria-label="幻灯片浏览视图"><Svg w={12} h={12} vb="0 0 12 12"><path d="M.7 1.200h4v3.500h-4zM7.200 1.200h4v3.500h-4zM.7 7.200h4v3.500h-4zM7.200 7.200h4v3.500h-4z" stroke="#222" strokeWidth="1.300" /></Svg></ViewButton>
                    <ViewButton aria-label="幻灯片放映"><Svg w={12} h={12} vb="0 0 12 12"><path d="M0 1.500h12M1.500 2v4h9V2M6 6v4M3 11h6" stroke="#222" strokeWidth="1.500" /></Svg></ViewButton>
                    <HScroll>
                      <svg width="4" height="7" viewBox="0 0 4 7" aria-hidden="true"><path d="M4 0v7L0 3.500z" fill="#8a8a8a" /></svg>
                      <svg width="4" height="7" viewBox="0 0 4 7" aria-hidden="true"><path d="M0 0v7l4-3.500z" fill="#8a8a8a" /></svg>
                    </HScroll>
                  </PaneFoot>
                </Pane>

                <Editor>
                  <Stage>
                    <Canvas>
                      <Slide>
                        <SlidePanel>
                          <SlideTitle>三、桥接模式的角色和职责</SlideTitle>
                          <TitleRule />
                          <TextFrame>
                            <Bullets>
                              {bullets.map(([lv, a, sel, b]) => (
                                <Bullet key={a} $in={lv}>
                                  <Mixed text={a} />
                                  {sel && <Marked>{sel}</Marked>}
                                  {sel && (
                                    <CursorSpot>
                                      <Svg w={9} h={17} vb="0 0 9 17"><path d="M1 .5h2.500l1 1 1-1H8M4.500 1.500v14M1 16.500h2.500l1-1 1 1H8" stroke="#222" /></Svg>
                                    </CursorSpot>
                                  )}
                                  {b && <Mixed text={b} />}
                                </Bullet>
                              ))}
                            </Bullets>
                            {handles.map(([x, y]) => <Handle key={x + y} $x={x} $y={y} />)}
                            <FitButton aria-label="自动调整选项">
                              <Svg w={14} h={14} vb="0 0 14 14"><path d="M1 6.500h12M1 8.500h12" stroke="#aaa" /><path d="M7 0v4M7 14v-3" stroke="#12307a" strokeWidth="1.500" /><path d="M4.500 2.500h5L7 5.500zM4.500 12h5L7 9z" fill="#12307a" /></Svg>
                            </FitButton>
                          </TextFrame>
                        </SlidePanel>
                      </Slide>
                    </Canvas>
                    <VScroll>
                      <ScrollArrow aria-label="向上滚动"><Tri up c="#555" /></ScrollArrow>
                      <Track $grow={7} />
                      <ScrollThumb><svg width="7" height="8" viewBox="0 0 7 8" aria-hidden="true"><path d="M0 1h7M0 4h7M0 7h7" stroke="#555" /></svg></ScrollThumb>
                      <Track $grow={3} />
                      <ScrollArrow aria-label="向下滚动"><Tri c="#555" /></ScrollArrow>
                      <PageButton aria-label="上一张幻灯片"><Svg w={8} h={10} vb="0 0 8 10"><path d="M0 4.500h8L4 .5zM0 9.500h8L4 5.500z" fill="#000" /></Svg></PageButton>
                      <PageButton aria-label="下一张幻灯片"><Svg w={8} h={10} vb="0 0 8 10"><path d="M0 .5h8L4 4.500zM0 5.500h8L4 9.500z" fill="#000" /></Svg></PageButton>
                      <ScrollEnd />
                    </VScroll>
                  </Stage>
                  <NotesRow>
                    <Notes aria-label="备注" defaultValue="单击此处添加备注" />
                    <VScroll $w={16}>
                      <ScrollArrow aria-label="备注向上滚动"><Tri up c="#777" /></ScrollArrow>
                      <Track $grow={1} />
                      <ScrollArrow aria-label="备注向下滚动"><Tri c="#777" /></ScrollArrow>
                    </VScroll>
                  </NotesRow>
                </Editor>
              </Work>

              <ToolbarRow $flush>
                <Toolbar role="toolbar" aria-label="绘图">
                  <Grip />
                  <LabelButton><Key text="绘图" k="R" /><Tri /></LabelButton>
                  <Tool icon="pointer" label="选择对象" on />
                  <Divider />
                  <LabelButton><Key text="自选图形" k="U" /><Tri /></LabelButton>
                  <Tools list={drawTools} />
                  <EndCap />
                </Toolbar>
              </ToolbarRow>
              <StatusBar>
                <StatusCell $w={263}>幻灯片 4 / 5</StatusCell>
                <StatusCell $w={265} $size={11}>Capsules</StatusCell>
                <StatusCell $w={189}>英语(美国)</StatusCell>
                <StatusCell $w={33} />
              </StatusBar>
            </Client>
            <RightEdge />
          </Body>
        </Window>
        <PlayerStatus>暂停</PlayerStatus>
      </Page>
    </>
  );
}
